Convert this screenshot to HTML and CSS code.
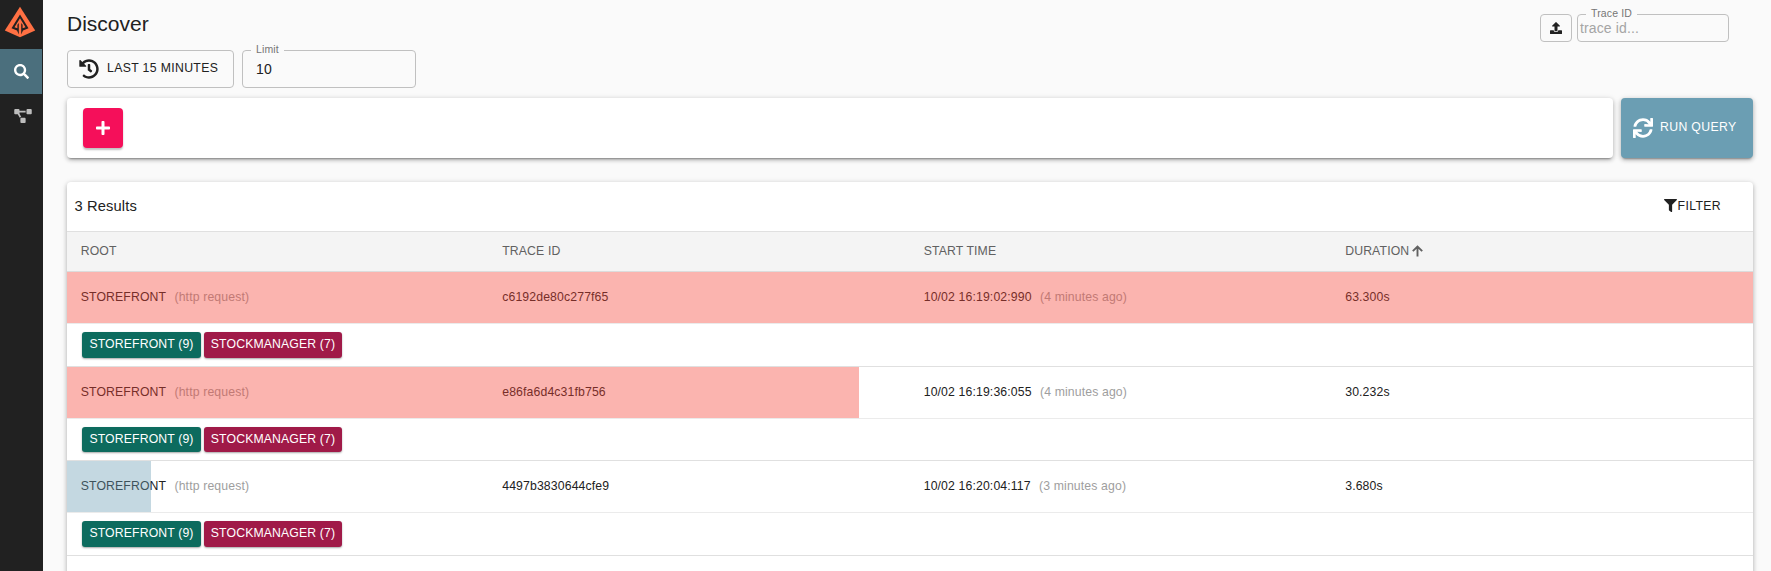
FILE: index.html
```html
<!DOCTYPE html>
<html lang="en">
<head>
<meta charset="utf-8">
<title>Discover</title>
<link rel="stylesheet" href="styles.css">
</head>
<body>
<div class="app">
  <nav class="sidebar">
    <a class="logo">
      <svg width="32" height="32" viewBox="0 0 32 32"><path fill="#ff7043" d="M16 .8 31.200 24.500 16 31.200.8 24.500Z"/><path fill="#212121" d="M16 8.500 24.500 22.300 19 24.500 17.200 28.500V17L18.600 18.800V22.300L21.500 21.300 16 12.300 10.500 21.300 13.400 22.300V18.800L14.800 17V28.500L13 24.500 7.500 22.300Z"/></svg>
    </a>
    <a class="nav-item active">
      <svg width="15" height="15" viewBox="0 0 512 512"><path fill="#fff" d="M505 442.700L405.300 343c-4.500-4.500-10.600-7-17-7H372c27.600-35.300 44-79.700 44-128C416 93.100 322.900 0 208 0S0 93.100 0 208s93.100 208 208 208c48.300 0 92.700-16.400 128-44v16.300c0 6.400 2.500 12.500 7 17l99.700 99.700c9.400 9.400 24.600 9.400 33.900 0l28.300-28.300c9.400-9.400 9.400-24.600.1-34zM208 336c-70.700 0-128-57.200-128-128 0-70.700 57.200-128 128-128 70.700 0 128 57.200 128 128 0 70.700-57.200 128-128 128z"/></svg>
    </a>
    <a class="nav-item graph">
      <svg width="18" height="14" viewBox="0 0 640 512"><path fill="#bdbdbd" d="M384 320H256c-17.670 0-32 14.330-32 32v128c0 17.670 14.330 32 32 32h128c17.670 0 32-14.330 32-32V352c0-17.670-14.330-32-32-32zM192 32c0-17.670-14.330-32-32-32H32C14.330 0 0 14.330 0 32v128c0 17.670 14.330 32 32 32h95.720l73.160 128.040C211.980 300.980 232.400 288 256 288h.280L192 175.510V128h224V64H192V32zM608 0H480c-17.670 0-32 14.330-32 32v128c0 17.670 14.330 32 32 32h128c17.670 0 32-14.330 32-32V32c0-17.670-14.330-32-32-32z"/></svg>
    </a>
  </nav>
  <main class="main">
    <header class="topbar">
      <h1 class="title">Discover</h1>
      <div class="trace-search">
        <button class="outlined upload"><svg width="12" height="12" viewBox="0 0 512 512"><path fill="#212121" d="M296 384h-80c-13.300 0-24-10.700-24-24V192h-87.700c-17.800 0-26.700-21.500-14.100-34.100L242.300 5.700c7.500-7.500 19.800-7.500 27.300 0l152.200 152.200c12.600 12.600 3.700 34.100-14.100 34.100H320v168c0 13.300-10.700 24-24 24zm216-8v112c0 13.300-10.700 24-24 24H24c-13.300 0-24-10.700-24-24V376c0-13.300 10.700-24 24-24h136v8c0 30.900 25.100 56 56 56h80c30.900 0 56-25.100 56-56v-8h136c13.300 0 24 10.700 24 24z"/></svg></button>
        <div class="field trace-field"><span class="field-label">Trace ID</span><span class="placeholder">trace id...</span></div>
      </div>
    </header>
    <div class="controls">
      <button class="outlined time-range">
        <svg width="20" height="20" viewBox="0 0 512 512"><path fill="#212121" d="M504 255.531c.253 136.640-111.180 248.372-247.820 248.468-59.015.042-113.223-20.530-155.822-54.911-11.077-8.940-11.905-25.541-1.839-35.607l11.267-11.267c8.609-8.609 22.353-9.551 31.891-1.984C173.062 425.135 212.781 440 256 440c101.705 0 184-82.311 184-184 0-101.705-82.311-184-184-184-48.814 0-93.149 18.969-126.068 49.932l50.754 50.754c10.080 10.080 2.941 27.314-11.313 27.314H24c-8.837 0-16-7.163-16-16V38.627c0-14.254 17.234-21.393 27.314-11.314l49.372 49.372C129.209 34.136 189.552 8 256 8c136.810 0 247.747 110.780 248 247.531zm-180.912 78.784l9.823-12.630c8.138-10.463 6.253-25.542-4.210-33.679L288 256.349V152c0-13.255-10.745-24-24-24h-16c-13.255 0-24 10.745-24 24v135.651l65.409 50.874c10.463 8.137 25.541 6.253 33.679-4.210z"/></svg>
        <span>LAST 15 MINUTES</span>
      </button>
      <div class="field limit-field"><span class="field-label">Limit</span><span>10</span></div>
    </div>
    <div class="query">
      <div class="query-bar">
        <button class="add"><svg width="14" height="14" viewBox="0 0 448 448"><path fill="#fff" d="M416 176H272V32c0-17.670-14.330-32-32-32h-32c-17.670 0-32 14.330-32 32v144H32c-17.670 0-32 14.330-32 32v32c0 17.670 14.330 32 32 32h144v144c0 17.670 14.330 32 32 32h32c17.670 0 32-14.330 32-32V272h144c17.670 0 32-14.330 32-32v-32c0-17.670-14.330-32-32-32z"/></svg></button>
      </div>
      <button class="run">
        <svg width="20" height="20" viewBox="0 0 512 512"><path fill="#fff" d="M440.650 12.570l4 82.770A247.160 247.160 0 0 0 255.830 8C134.730 8 33.910 94.920 12.290 209.820A12 12 0 0 0 24.090 224h49.050a12 12 0 0 0 11.670-9.260 175.910 175.910 0 0 1 317-56.940l-101.460-4.860a12 12 0 0 0-12.570 12v47.410a12 12 0 0 0 12 12H500a12 12 0 0 0 12-12V12a12 12 0 0 0-12-12h-47.370a12 12 0 0 0-11.980 12.570zM255.830 432a175.610 175.610 0 0 1-146-77.800l101.800 4.870a12 12 0 0 0 12.570-12v-47.400a12 12 0 0 0-12-12H12a12 12 0 0 0-12 12V500a12 12 0 0 0 12 12h47.350a12 12 0 0 0 12-12.600l-4.150-82.570A247.170 247.170 0 0 0 255.830 504c121.110 0 221.930-86.920 243.550-201.820a12 12 0 0 0-11.800-14.180h-49.050a12 12 0 0 0-11.670 9.260A175.860 175.860 0 0 1 255.830 432z"/></svg>
        <span>RUN QUERY</span>
      </button>
    </div>
    <section class="results">
      <div class="results-head">
        <span class="count">3 Results</span>
        <button class="filter"><svg width="13" height="13" viewBox="0 0 512 512"><path fill="#212121" d="M487.976 0H24.028C2.710 0-8.047 25.866 7.058 40.971L192 225.941V432c0 7.831 3.821 15.170 10.237 19.662l80 55.980C298.020 518.690 320 507.493 320 487.980V225.941l184.947-184.970C520.021 25.896 509.338 0 487.976 0z"/></svg><span>FILTER</span></button>
      </div>
      <div class="columns table-head">
        <span>ROOT</span><span>TRACE ID</span><span>START TIME</span>
        <span class="sorted">DURATION <svg width="11" height="12" viewBox="0 0 11 12"><path d="M5.500 11.500V1.200M.8 6.200 5.500 1.500 10.200 6.200" fill="none" stroke="#616161" stroke-width="1.900"/></svg></span>
      </div>

      <div class="columns trace">
        <span>STOREFRONT<small>(http request)</small></span><span>c6192de80c277f65</span><span>10/02 16:19:02:990<small>(4 minutes ago)</small></span><span>63.300s</span>
        <i class="bar error" style="width:100%"></i>
      </div>
      <div class="services"><span class="chip storefront">STOREFRONT (9)</span><span class="chip stock">STOCKMANAGER (7)</span></div>

      <div class="columns trace">
        <span>STOREFRONT<small>(http request)</small></span><span>e86fa6d4c31fb756</span><span>10/02 16:19:36:055<small>(4 minutes ago)</small></span><span>30.232s</span>
        <i class="bar error" style="width:46.98%"></i>
      </div>
      <div class="services"><span class="chip storefront">STOREFRONT (9)</span><span class="chip stock">STOCKMANAGER (7)</span></div>

      <div class="columns trace">
        <span>STOREFRONT<small>(http request)</small></span><span>4497b3830644cfe9</span><span>10/02 16:20:04:117<small>(3 minutes ago)</small></span><span>3.680s</span>
        <i class="bar ok" style="width:4.98%"></i>
      </div>
      <div class="services"><span class="chip storefront">STOREFRONT (9)</span><span class="chip stock">STOCKMANAGER (7)</span></div>
    </section>
  </main>
</div>
</body>
</html>
```

FILE: styles.css
```css
* { box-sizing: border-box; }
html { font-size: 14px; }
body {
  margin: 0;
  background: #fafafa;
  color: #212121;
  font-family: "Liberation Sans", Arial, sans-serif;
  font-size: .875rem;
  letter-spacing: .01071em;
}
button {
  font: inherit;
  color: inherit;
  letter-spacing: .02857em;
  background: none;
  border: 0;
  padding: 0;
  display: flex;
  align-items: center;
}
svg { display: block; flex: none; }

.app { display: flex; height: 571px; overflow: hidden; }

.sidebar { width: 43px; flex: none; background: #212121; }
.logo { display: block; height: 49px; padding: 6px 0 0 4px; }
.nav-item { display: flex; width: 42px; height: 45px; align-items: center; justify-content: center; }
.nav-item.active { background: #4b6f7d; }
.nav-item.graph { padding: 0 0 1px 4px; }

.main { flex: 1; padding: 14px 18px 0 24px; }

.topbar { display: flex; justify-content: space-between; height: 36px; padding-right: 24px; }
.title { margin: -4px 0 0; font-size: 1.5rem; font-weight: 400; line-height: 28px; letter-spacing: 0; }
.trace-search { display: flex; gap: 5px; height: 28px; }

.outlined, .field { border: 1px solid #c0c0c0; border-radius: 4px; }
.upload { width: 32px; justify-content: center; }
.field { position: relative; display: flex; align-items: center; font-size: 1rem; letter-spacing: .00938em; }
.field-label {
  position: absolute;
  top: -9px;
  left: 8px;
  padding: 0 5px;
  background: #fafafa;
  color: #757575;
  font-size: .75rem;
  line-height: 14px;
}
.trace-field { width: 152px; padding-left: 2px; }
.placeholder { color: #a5a5a5; }

.controls { display: flex; gap: 8px; height: 48px; }
.time-range { width: 167px; height: 38px; padding: 0 0 1px 11px; gap: 8px; }
.time-range span { padding-bottom: 2px; }
.limit-field { width: 174px; height: 38px; padding-left: 13px; }

.query { display: flex; gap: 8px; height: 60px; }
.query-bar, .results, .run {
  border-radius: 4px;
  box-shadow: 0 3px 2px -2px rgba(0,0,0,.3), 0 2px 4px 0 rgba(0,0,0,.2), 0 1px 6px 0 rgba(0,0,0,.14);
}
.query-bar { flex: 1; padding: 10px 16px; background: #fff; }
.add {
  width: 40px;
  height: 40px;
  justify-content: center;
  border-radius: 4px;
  background: #f50f5a;
  box-shadow: 0 2px 2px rgba(0,0,0,.25);
}
.run { width: 132px; padding-left: 12px; gap: 7px; background: #6b9eb3; color: #fff; }
.run span { padding-bottom: 2px; }

.results { height: 420px; margin-top: 24px; background: #fff; }
.results-head {
  display: flex;
  align-items: center;
  justify-content: space-between;
  height: 50px;
  padding: 0 32px 2px 7.500px;
  border-bottom: 1px solid #e0e0e0;
}
.count { font-size: 1.05rem; }
.filter { gap: 1px; }

.columns { display: grid; grid-template-columns: repeat(4, 1fr); align-items: center; }
.columns > span { padding-left: 13.700px; }
.table-head { height: 40px; padding-bottom: 2px; background: #f4f4f4; border-bottom: 1px solid #dcdcdc; color: #616161; }
.sorted { display: flex; gap: 3px; align-items: center; }

.trace { position: relative; height: 52px; padding-bottom: 1px; border-bottom: 1px solid #ebebeb; }
.trace small { margin-left: 8.300px; font-size: inherit; color: #9e9e9e; }
.bar { position: absolute; top: 0; left: 0; height: 100%; }
.bar.error { background: rgba(244,67,54,.4); }
.bar.ok { background: rgba(107,158,179,.4); }

.services {
  display: flex;
  align-items: center;
  gap: 3px;
  height: 42.667px;
  padding-left: 15px;
  border-bottom: 1px solid #e0e0e0;
}
.chip {
  height: 25.500px;
  border-radius: 3px;
  color: #fff;
  line-height: 24px;
  text-align: center;
  box-shadow: 0 1px 2px rgba(0,0,0,.35);
}
.storefront { width: 119px; background: #0d6b5e; }
.stock { width: 138px; background: #a01a48; }
```
